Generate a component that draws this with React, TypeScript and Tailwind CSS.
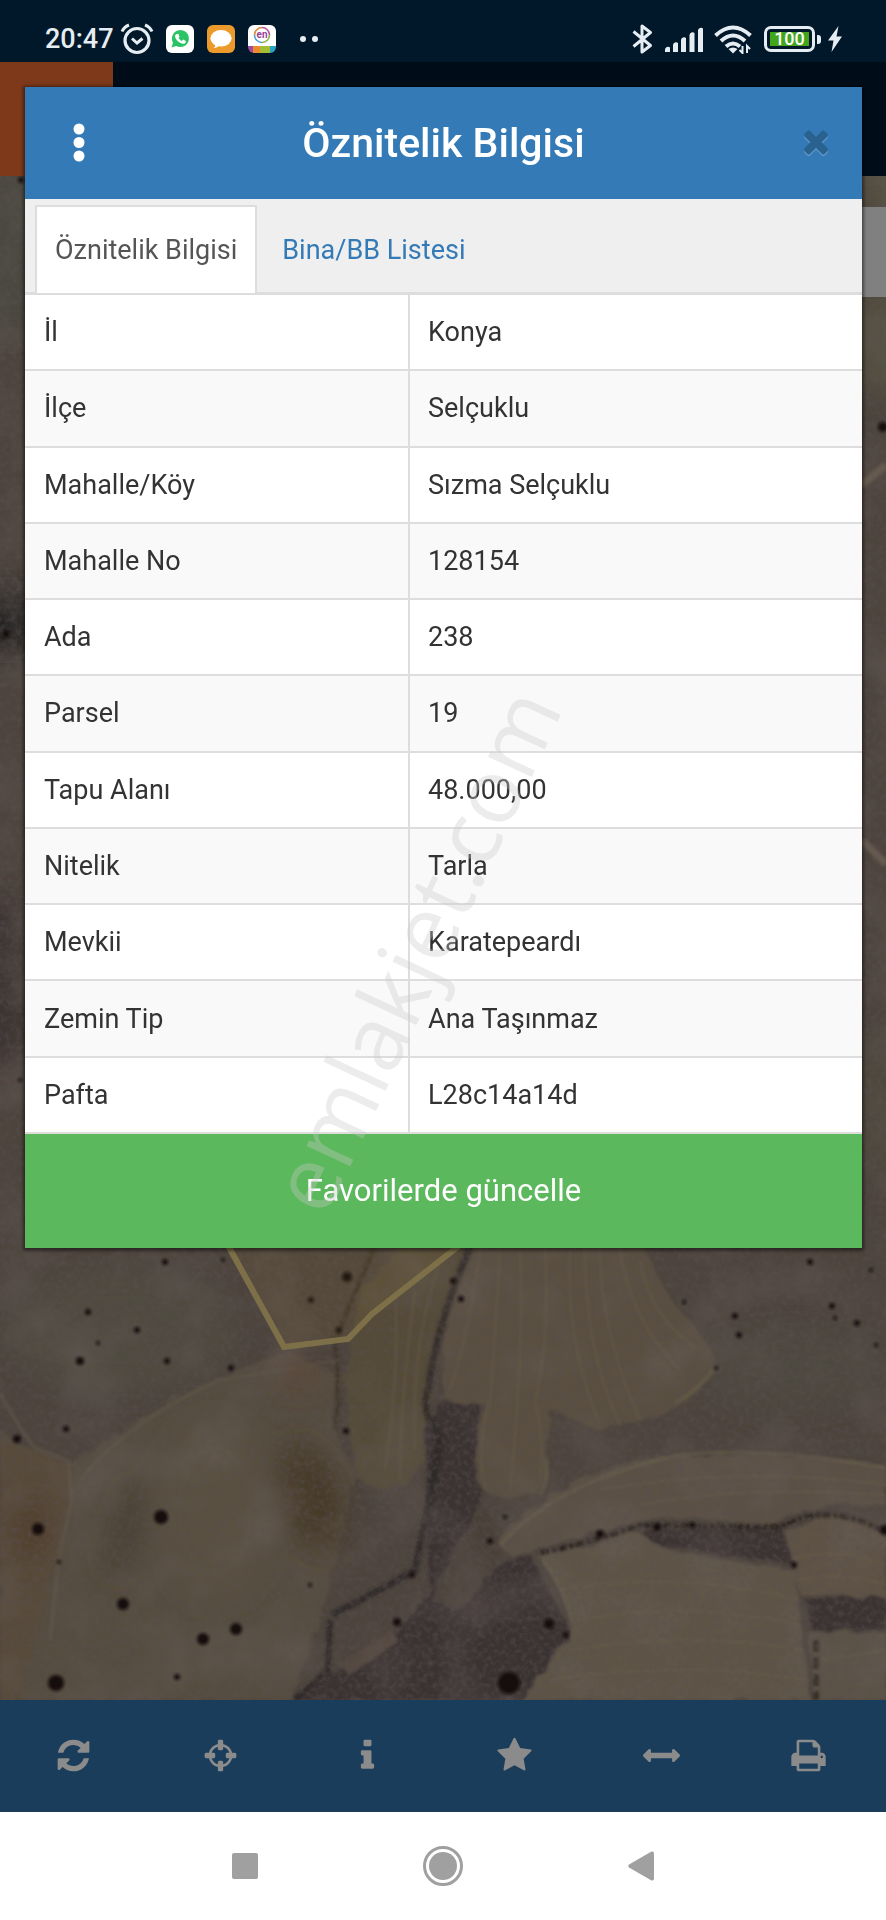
import React from "react";

const rows: [string, string][] = [
  ["İl", "Konya"],
  ["İlçe", "Selçuklu"],
  ["Mahalle/Köy", "Sızma Selçuklu"],
  ["Mahalle No", "128154"],
  ["Ada", "238"],
  ["Parsel", "19"],
  ["Tapu Alanı", "48.000,00"],
  ["Nitelik", "Tarla"],
  ["Mevkii", "Karatepeardı"],
  ["Zemin Tip", "Ana Taşınmaz"],
  ["Pafta", "L28c14a14d"],
];

const icons = {
  refresh:
    "M1639 1056q0 5-1 7-64 268-268 434.5t-478 166.5q-146 0-282.5-55t-243.5-157l-129 129q-19 19-45 19t-45-19-19-45v-448q0-26 19-45t45-19h448q26 0 45 19t19 45-19 45l-137 137q71 66 161 102t187 36q134 0 250-65t186-179q11-17 53-117 8-23 30-23h192q13 0 22.500 9.500t9.500 22.500zm25-800v448q0 26-19 45t-45 19h-448q-26 0-45-19t-19-45 19-45l138-138q-148-137-349-137-134 0-250 65t-186 179q-11 17-53 117-8 23-30 23h-199q-13 0-22.500-9.500t-9.500-22.500v-7q65-268 270-434.500t480-166.500q146 0 284 55.500t245 156.500l130-129q19-19 45-19t45 19 19 45z",
  crosshairs:
    "M1325 1024h-109q-26 0-45-19t-19-45v-128q0-26 19-45t45-19h109q-32-108-112.500-188.500t-188.500-112.500v109q0 26-19 45t-45 19h-128q-26 0-45-19t-19-45v-109q-108 32-188.500 112.500t-112.500 188.500h109q26 0 45 19t19 45v128q0 26-19 45t-45 19h-109q32 108 112.500 188.500t188.500 112.500v-109q0-26 19-45t45-19h128q26 0 45 19t19 45v109q108-32 188.500-112.500t112.500-188.500zm339-192v128q0 26-19 45t-45 19h-143q-37 161-154.500 278.500t-278.500 154.500v143q0 26-19 45t-45 19h-128q-26 0-45-19t-19-45v-143q-161-37-278.500-154.500t-154.500-278.500h-143q-26 0-45-19t-19-45v-128q0-26 19-45t45-19h143q37-161 154.500-278.500t278.500-154.500v-143q0-26 19-45t45-19h128q26 0 45 19t19 45v143q161 37 278.500 154.500t154.500 278.500h143q26 0 45 19t19 45z",
  info: "M1216 1344v128q0 26-19 45t-45 19h-512q-26 0-45-19t-19-45v-128q0-26 19-45t45-19h64v-384h-64q-26 0-45-19t-19-45v-128q0-26 19-45t45-19h384q26 0 45 19t19 45v576h64q26 0 45 19t19 45zm-128-1152v192q0 26-19 45t-45 19h-256q-26 0-45-19t-19-45v-192q0-26 19-45t45-19h256q26 0 45 19t19 45z",
  star: "M1728 647q0 22-26 48l-363 354 86 500q1 7 1 20 0 21-10.500 35.500t-30.500 14.500q-19 0-40-12l-449-236-449 236q-22 12-40 12-21 0-31.500-14.500t-10.500-35.500q0-6 2-20l86-500-364-354q-25-27-25-48 0-37 56-46l502-73 225-455q19-41 49-41t49 41l225 455 502 73q56 9 56 46z",
  arrows:
    "M1792 896q0 26-19 45l-256 256q-19 19-45 19t-45-19-19-45v-128h-1024v128q0 26-19 45t-45 19-45-19l-256-256q-19-19-19-45t19-45l256-256q19-19 45-19t45 19 19 45v128h1024v-128q0-26 19-45t45-19 45 19l256 256q19 19 19 45z",
  print:
    "M448 1536h896v-256h-896v256zm0-640h896v-384h-160q-40 0-68-28t-28-68v-160h-640v640zm1152 64q0-26-19-45t-45-19-45 19-19 45 19 45 45 19 45-19 19-45zm128 0v416q0 13-9.500 22.500t-22.500 9.500h-224v160q0 40-28 68t-68 28h-960q-40 0-68-28t-28-68v-160h-224q-13 0-22.500-9.500t-9.500-22.500v-416q0-79 56.500-135.500t135.500-56.500h64v-544q0-40 28-68t68-28h672q40 0 88 20t76 48l152 152q28 28 48 76t20 88v256h64q79 0 135.500 56.500t56.500 135.500z",
  times:
    "M1490 1226q0 40-28 68l-136 136q-28 28-68 28t-68-28l-294-294-294 294q-28 28-68 28t-68-28l-136-136q-28-28-28-68t28-68l294-294-294-294q-28-28-28-68t28-68l136-136q28-28 68-28t68 28l294 294 294-294q28-28 68-28t68 28l136 136q28 28 28 68t-28 68l-294 294 294 294q28 28 28 68z",
};

function Icon({ d, className }: { d: string; className: string }) {
  return (
    <svg viewBox="0 0 1792 1792" className={className} fill="currentColor" aria-hidden="true">
      <path d={d} />
    </svg>
  );
}

function StatusBar() {
  return (
    <header className="flex h-[62px] shrink-0 items-center bg-[#001829] pt-4 pr-11 pl-[45px] text-[#e6edf2]">
      <span className="text-[27px] leading-8 font-medium">20:47</span>
      <svg viewBox="0 0 34 34" className="ml-[6px] size-[34px]" fill="none" stroke="currentColor" aria-hidden="true">
        <circle cx="17" cy="18.500" r="12" strokeWidth="3.200" />
        <path d="M2 9.500Q4 5 9 3M32 9.500Q30 5 25 3" strokeWidth="3" />
        <path d="M12 16.500l5 4.500 5.500-4.500" strokeWidth="3" />
      </svg>
      <svg viewBox="0 0 28 28" className="ml-3 size-7" aria-hidden="true">
        <rect width="28" height="28" rx="6" fill="#fff" />
        <path d="M5.500 22.500L7 17.800A8.500 8.500 0 1 1 10.200 21z" fill="#2bc465" />
        <path d="M10.200 9.200l2-.4 1.400 2.900-1 1.300c.9 1.500 1.900 2.300 3.200 2.900l1.300-1.400 2.700 1.400c.2 2-1.500 3.100-3.200 2.900-4-.7-7.500-4.700-7.600-7.700 0-.800.4-1.500 1.200-1.900z" fill="#fff" />
      </svg>
      <svg viewBox="0 0 28 28" className="ml-[13px] size-7" aria-hidden="true">
        <rect width="28" height="28" rx="6" fill="#ed9a2d" />
        <ellipse cx="14" cy="13.300" rx="10.600" ry="8.300" fill="#fff" />
        <path d="M8 19c.5 2 0 3-1.300 4 3 0 5-1.500 6-3z" fill="#fff" />
      </svg>
      <svg viewBox="0 0 28 28" className="ml-[13px] size-7" aria-hidden="true">
        <path d="M0 21V6a6 6 0 0 1 6-6h16a6 6 0 0 1 6 6v15z" fill="#fff" />
        <path d="M0 21h6v7a6 6 0 0 1-6-6z" fill="#a04ba0" />
        <path d="M5 21h7v7H5z" fill="#ee8a2b" />
        <path d="M12 21h11v7H12z" fill="#a3bd35" />
        <path d="M22 21h6v1a6 6 0 0 1-6 6z" fill="#2aa3c4" />
        <g fill="none" strokeWidth="1.600">
          <path d="M6.500 10a7.500 7.500 0 0 1 7.500-7.500" stroke="#e08a3a" />
          <path d="M14 2.500a7.500 7.500 0 0 1 7.500 7.500" stroke="#b45a9c" />
          <path d="M21.500 10a7.500 7.500 0 0 1-7.500 7.500" stroke="#8fb04a" />
          <path d="M14 17.500a7.500 7.500 0 0 1-7.500-7.500" stroke="#4aa5d0" />
        </g>
        <text x="14" y="13" textAnchor="middle" fontSize="10" fontWeight="700" fill="#9a3f98" fontFamily="Roboto, sans-serif">en</text>
      </svg>
      <span className="ml-6 flex gap-[6px]" aria-hidden="true">
        <i className="size-[6px] rounded-full bg-current" />
        <i className="size-[6px] rounded-full bg-current" />
      </span>
      <div className="ml-auto flex items-center">
        <svg viewBox="0 0 22 32" className="h-8 w-[22px]" fill="none" stroke="currentColor" strokeWidth="3" strokeLinejoin="round" aria-hidden="true">
          <path d="M1.500 8.500l17 14L10 29V3l8.500 6.500-17 14" />
        </svg>
        <svg viewBox="0 0 40 28" className="ml-[10px] h-7 w-10" fill="currentColor" aria-hidden="true">
          <path d="M1 24.500a3 3 0 0 1 5-2V27H1zM9 20a3 3 0 0 1 5-2v9H9zM17 15a3 3 0 0 1 5-2v14h-5zM25.500 10a3 3 0 0 1 5-2v19h-5zM34 5.500a3 3 0 0 1 5-2V27h-5z" />
        </svg>
        <svg viewBox="0 0 38 30" className="ml-[10px] h-[30px] w-[38px]" fill="none" stroke="currentColor" strokeWidth="4" aria-hidden="true">
          <path d="M1.500 11.500Q19-4.500 36.500 11.500" />
          <path d="M7 17q12-11 24 0" />
          <path d="M12 22.500q7-6 14 0" />
          <path d="M14.500 25q4.500-3 9 0L19 29.500z" fill="currentColor" stroke="none" />
          <path d="M28.500 22v7l-3-3M33 29v-7l3 3" strokeWidth="2" />
        </svg>
        <span className="relative ml-3 flex h-[26px] w-[51px] items-center rounded-[7px] border-[3px] border-current p-[3px]">
          <span className="flex h-full w-full items-center justify-center bg-[#43a51c] text-[18px] leading-4 font-medium text-white">100</span>
        </span>
        <i className="ml-[2px] h-[9px] w-1 rounded-r-[3px] bg-current" aria-hidden="true" />
        <svg viewBox="0 0 14 26" className="ml-[7px] h-[26px] w-[14px]" fill="currentColor" aria-hidden="true">
          <path d="M10.500 0L0 14.500h5.500L3.500 26 14 10.500H8.500z" />
        </svg>
      </div>
    </header>
  );
}

const trees: [number, number, number][] = [
  [38, 1529, 6], [161, 1517, 7], [123, 1604, 6], [203, 1639, 6], [236, 1629, 6], [56, 1683, 8],
  [80, 1361, 4], [137, 1330, 3], [167, 1361, 3], [88, 1312, 3], [231, 1368, 3], [17, 1439, 4],
  [347, 1277, 5], [311, 1300, 3], [339, 1330, 3], [346, 1431, 3], [98, 1343, 2], [66, 1429, 3],
  [59, 1562, 2], [177, 1677, 3], [310, 1585, 2], [397, 1622, 4], [509, 1683, 11], [600, 1534, 4],
  [657, 1527, 4], [692, 1525, 3], [794, 1565, 3], [490, 1541, 3], [505, 1517, 2], [566, 1635, 3],
  [549, 1624, 5], [453, 1281, 3], [461, 1299, 3], [832, 1306, 3], [835, 1318, 2], [857, 1323, 3],
  [739, 1335, 3], [735, 1316, 3], [810, 1262, 3], [871, 1270, 2], [165, 1262, 3], [223, 1260, 2],
  [684, 1302, 2], [716, 1368, 2], [876, 1345, 2], [412, 1575, 3], [885, 1530, 5],
  [883, 427, 5], [21, 180, 3], [6, 634, 4], [20, 1080, 2],
];

function SatelliteMap() {
  return (
    <svg viewBox="0 176 886 1524" preserveAspectRatio="xMidYMax slice" className="absolute inset-0 h-full w-full" aria-hidden="true">
      <defs>
        <filter id="grain" x="0" y="0" width="100%" height="100%">
          <feTurbulence type="fractalNoise" baseFrequency="0.180" numOctaves="4" seed="7" />
          <feColorMatrix values="0 0 0 0 0.100  0 0 0 0 0.080  0 0 0 0 0.080  1.900 0 0 0 -0.760" />
        </filter>
        <filter id="patches" x="0" y="0" width="100%" height="100%">
          <feTurbulence type="fractalNoise" baseFrequency="0.016" numOctaves="4" seed="11" />
          <feColorMatrix values="0 0 0 0 0.170  0 0 0 0 0.140  0 0 0 0 0.130  0 2 0 0 -0.850" />
        </filter>
        <filter id="soft" x="-20%" y="-20%" width="140%" height="140%">
          <feGaussianBlur stdDeviation="1.500" />
        </filter>
        <filter id="haze" x="-40%" y="-40%" width="180%" height="180%">
          <feGaussianBlur stdDeviation="14" />
        </filter>
        <filter id="rough" x="-5%" y="-5%" width="110%" height="110%">
          <feTurbulence type="fractalNoise" baseFrequency="0.060" numOctaves="2" seed="3" result="n" />
          <feDisplacementMap in="SourceGraphic" in2="n" scale="9" />
          <feGaussianBlur stdDeviation="1.500" />
        </filter>
      </defs>
      <rect y="176" width="886" height="1524" fill="#4d443d" />
      <g filter="url(#haze)">
        <rect x="-20" y="170" width="50" height="160" fill="#4a4a40" />
        <rect x="-20" y="590" width="50" height="60" fill="#1f1a1a" />
        <rect x="-20" y="900" width="50" height="160" fill="#3d3531" />
        <rect x="860" y="150" width="50" height="60" fill="#55513f" />
        <rect x="860" y="290" width="50" height="100" fill="#52513f" />
        <rect x="860" y="1040" width="50" height="130" fill="#504a3c" />
        <ellipse cx="120" cy="1330" rx="110" ry="60" fill="#504c41" />
        <ellipse cx="790" cy="1370" rx="90" ry="35" fill="#4d4a41" />
      </g>
      <g filter="url(#rough)">
        <path d="M240 1370L285 1350L345 1380L330 1420L355 1475L335 1560L320 1620L290 1700H0V1430L20 1445L70 1462L140 1420Q190 1385 240 1370z" fill="#564d3f" />
        <path d="M0 1440L20 1448L68 1462L70 1500L45 1600L20 1700H0z" fill="#584b3b" />
        <path d="M400 1247H470Q440 1330 430 1390Q435 1450 410 1480Q380 1500 355 1475L345 1380L360 1290z" fill="#554b39" />
        <path d="M466 1247H645Q665 1300 690 1320L716 1358Q715 1385 680 1405Q640 1425 600 1430L550 1410Q545 1450 549 1470Q545 1495 520 1497Q485 1500 478 1480Q470 1435 485 1405Q455 1408 443 1395Q440 1320 466 1247z" fill="#5a4f40" />
        <path d="M497 1545Q520 1505 600 1470Q690 1440 886 1465V1505Q820 1500 760 1525Q690 1515 640 1520Q560 1540 515 1558z" fill="#5b5145" />
        <path d="M540 1553L590 1545L635 1530L670 1550L795 1570L810 1700H520Q560 1640 572 1625Q565 1590 540 1560z" fill="#5e5447" />
        <path d="M785 1530L830 1515L886 1530V1598L800 1595z" fill="#5e5345" />
        <path d="M810 1632H886V1700H815z" fill="#5c5246" />
      </g>
      <g filter="url(#rough)" fill="#3a3231">
        <path d="M443 1402L480 1405L474 1470L484 1510L455 1560L430 1590L500 1565L530 1555L565 1620L572 1632L520 1700H290L330 1675L400 1630L430 1590L428 1500L425 1430z" />
        <path d="M640 1530L780 1525L795 1565L740 1556L655 1545z" />
        <path d="M805 1598H886V1630H812z" />
      </g>
      <path d="M484 1500Q500 1530 500 1560L460 1610L432 1600L450 1560z" fill="#4a4039" filter="url(#rough)" />
      <g filter="url(#soft)" fill="none">
        <path d="M332 1615Q380 1590 415 1570Q430 1500 440 1440Q420 1410 428 1390Q435 1330 470 1247" stroke="#2b2624" strokeWidth="7" opacity=".8" />
        <path d="M330 1620L328 1670L295 1700" stroke="#302a29" strokeWidth="6" />
        <path d="M345 1670L395 1635" stroke="#54483f" strokeWidth="14" />
        <path d="M375 1247L335 1340Q340 1400 335 1430" stroke="#382d22" strokeWidth="4" opacity=".7" />
        <path d="M540 1553Q600 1540 640 1525L780 1527Q830 1500 886 1533" stroke="#2b221c" strokeWidth="5" strokeDasharray="9 3 4 2" />
        <path d="M816 1640V1700" stroke="#352d25" strokeWidth="6" strokeDasharray="12 5" />
        <path d="M0 1393Q20 1430 35 1448L68 1460L72 1500L60 1550L50 1640" stroke="#67604f" strokeWidth="3" opacity=".5" />
        <path d="M80 1480Q130 1420 220 1380L340 1360" stroke="#6a6050" strokeWidth="2" opacity=".5" />
        <path d="M716 1365Q705 1385 675 1403M500 1545Q560 1480 680 1455Q760 1445 886 1468M543 1560Q565 1590 572 1625M545 1460Q550 1480 540 1495" stroke="#71674f" strokeWidth="3" opacity=".5" />
      </g>
      <g fill="none" stroke="#6e624e" opacity=".5" filter="url(#soft)" strokeWidth="2">
        <path d="M480 1250Q470 1330 450 1390M500 1250Q495 1340 490 1400Q475 1450 486 1490M520 1250Q525 1340 510 1490M545 1250Q550 1340 535 1400Q545 1440 540 1480M570 1250Q565 1340 600 1425M600 1250Q600 1330 640 1420M620 1250Q630 1320 680 1370M640 1260Q650 1320 700 1350M585 1250Q585 1350 620 1425" />
        <path d="M395 1290Q400 1370 385 1470M415 1290Q400 1400 400 1480M440 1260Q410 1350 415 1450" />
        <path d="M560 1590Q680 1570 800 1600M575 1620Q690 1600 800 1625M570 1650Q690 1630 805 1650M550 1680Q690 1660 805 1680M600 1490Q740 1465 886 1485M640 1505Q740 1485 886 1495M790 1560Q830 1545 886 1565M795 1580Q840 1570 886 1585M820 1660L886 1650" />
      </g>
      <g filter="url(#haze)">
        <ellipse cx="312" cy="1500" rx="28" ry="60" fill="#42341f" opacity=".8" transform="rotate(-18 312 1500)" />
        <ellipse cx="215" cy="1510" rx="60" ry="90" fill="#5b5143" opacity=".5" />
        <ellipse cx="125" cy="1530" rx="12" ry="50" fill="#413829" opacity=".8" transform="rotate(14 125 1530)" />
        <ellipse cx="300" cy="1375" rx="20" ry="12" fill="#5c4233" />
        <ellipse cx="30" cy="1530" rx="18" ry="30" fill="#4f3e2b" />
      </g>
      <rect y="176" width="886" height="1524" filter="url(#patches)" opacity=".35" />
      <rect y="176" width="886" height="1524" filter="url(#grain)" opacity=".6" />
      <path d="M862 485L886 465M862 840L886 864" stroke="#665a50" strokeWidth="7" filter="url(#soft)" />
      <g fill="#120d0b" filter="url(#soft)">
        {trees.map(([x, y, r]) => (
          <circle key={`${x}-${y}`} cx={x} cy={y} r={r} />
        ))}
      </g>
      <path d="M225 1240L284 1347L348 1339L372 1314L460 1245z" fill="#8a7335" fillOpacity=".12" stroke="#7d7049" strokeWidth="6" />
      <rect x="860" y="207" width="26" height="90" fill="#808080" />
    </svg>
  );
}

function AttributeDialog() {
  return (
    <section role="dialog" aria-labelledby="dialog-title" className="relative bg-white shadow-[0_1px_3px_2px_rgba(0,0,0,0.450)]">
      <div className="flex h-28 items-center bg-[#337ab7] px-6 text-white">
        <button type="button" aria-label="Menü" className="flex w-[60px] justify-center">
          <svg viewBox="0 0 12 40" className="h-10 w-3" fill="currentColor" aria-hidden="true">
            <circle cx="6" cy="6" r="5.500" />
            <circle cx="6" cy="19.500" r="5.500" />
            <circle cx="6" cy="33" r="5.500" />
          </svg>
        </button>
        <h1 id="dialog-title" className="flex-1 text-center text-[41px] leading-[48px] font-medium">Öznitelik Bilgisi</h1>
        <button type="button" aria-label="Kapat" className="flex w-[60px] justify-end pr-1 text-[#29628f]">
          <Icon d={icons.times} className="size-9 shrink-0 drop-shadow-[0_2px_0_#5a94c6]" />
        </button>
      </div>
      <div role="tablist" className="flex h-24 items-end border-b-[3px] border-[#ddd] bg-[#efefef] pt-[6px] pl-[10px] text-[27px] leading-8">
        <button type="button" role="tab" aria-selected="true" className="-mb-px h-[88px] border-2 border-b-0 border-[#ddd] bg-white px-[18px] text-[#555]">
          Öznitelik Bilgisi
        </button>
        <button type="button" role="tab" aria-selected="false" className="-mb-px h-[88px] border-2 border-b-0 border-transparent px-[23px] text-[#337ab7]">
          Bina/BB Listesi
        </button>
      </div>
      <table className="h-[839px] w-full table-fixed border-separate border-spacing-0 text-left text-[27px] leading-8 text-[#333]">
        <tbody>
          {rows.map(([name, value]) => (
            <tr key={name} className="even:bg-[#f9f9f9]">
              <th scope="row" className="w-[46%] border-r-2 border-b-2 border-[#ddd] pl-[19px] font-normal">{name}</th>
              <td className="border-b-2 border-[#ddd] pl-[18px]">{value}</td>
            </tr>
          ))}
        </tbody>
      </table>
      <button type="button" className="block h-[114px] w-full bg-[#5cb85c] text-[31px] leading-9 text-white">
        Favorilerde güncelle
      </button>
      <span className="pointer-events-none absolute top-[862px] left-[388px] -translate-x-1/2 -translate-y-1/2 rotate-[-65deg] font-['Open_Sans',sans-serif] text-[90px] leading-none whitespace-nowrap text-[rgba(200,200,200,0.350)]">
        emlakjet.com
      </span>
    </section>
  );
}

const tools: { label: string; d: string }[] = [
  { label: "Yenile", d: icons.refresh },
  { label: "Konum", d: icons.crosshairs },
  { label: "Bilgi", d: icons.info },
  { label: "Favoriler", d: icons.star },
  { label: "Ölçüm", d: icons.arrows },
  { label: "Yazdır", d: icons.print },
];

export default function App() {
  return (
    <div className="flex min-h-screen flex-col bg-white font-[Roboto,sans-serif]">
      <StatusBar />
      <main className="relative flex-1 overflow-hidden">
        <div className="absolute inset-0 flex flex-col">
          <div className="flex h-[114px] shrink-0 bg-[#000d18]">
            <div className="w-[113px] bg-[#7e391b]" />
          </div>
          <div className="relative flex-1">
            <SatelliteMap />
          </div>
        </div>
        <div className="pt-[25px] pr-6 pb-8 pl-[25px]">
          <AttributeDialog />
        </div>
      </main>
      <nav className="flex h-[112px] shrink-0 items-center bg-[#1a3d5c] pr-1 pb-[2px] text-[#8b8b8b]">
        {tools.map(({ label, d }) => (
          <button key={label} type="button" aria-label={label} className="flex flex-1 justify-center">
            <Icon d={d} className="size-[37px]" />
          </button>
        ))}
      </nav>
      <nav className="flex h-[108px] shrink-0 items-center justify-center gap-[158px] text-[#a0a0a0]">
        <button type="button" aria-label="Son uygulamalar" className="flex w-10 justify-center">
          <i className="size-[26px] rounded-[2px] bg-current" />
        </button>
        <button type="button" aria-label="Ana ekran" className="flex size-10 items-center justify-center rounded-full border-[3px] border-current">
          <i className="size-7 rounded-full bg-current" />
        </button>
        <button type="button" aria-label="Geri" className="flex w-10 justify-center">
          <svg viewBox="0 0 26 30" className="h-[30px] w-[26px]" fill="currentColor" aria-hidden="true">
            <path d="M1 13.500L23.500.6Q26 0 26 2.500v25Q26 30 23.500 29.400L1 16.500Q-.5 15 1 13.500z" />
          </svg>
        </button>
      </nav>
    </div>
  );
}
